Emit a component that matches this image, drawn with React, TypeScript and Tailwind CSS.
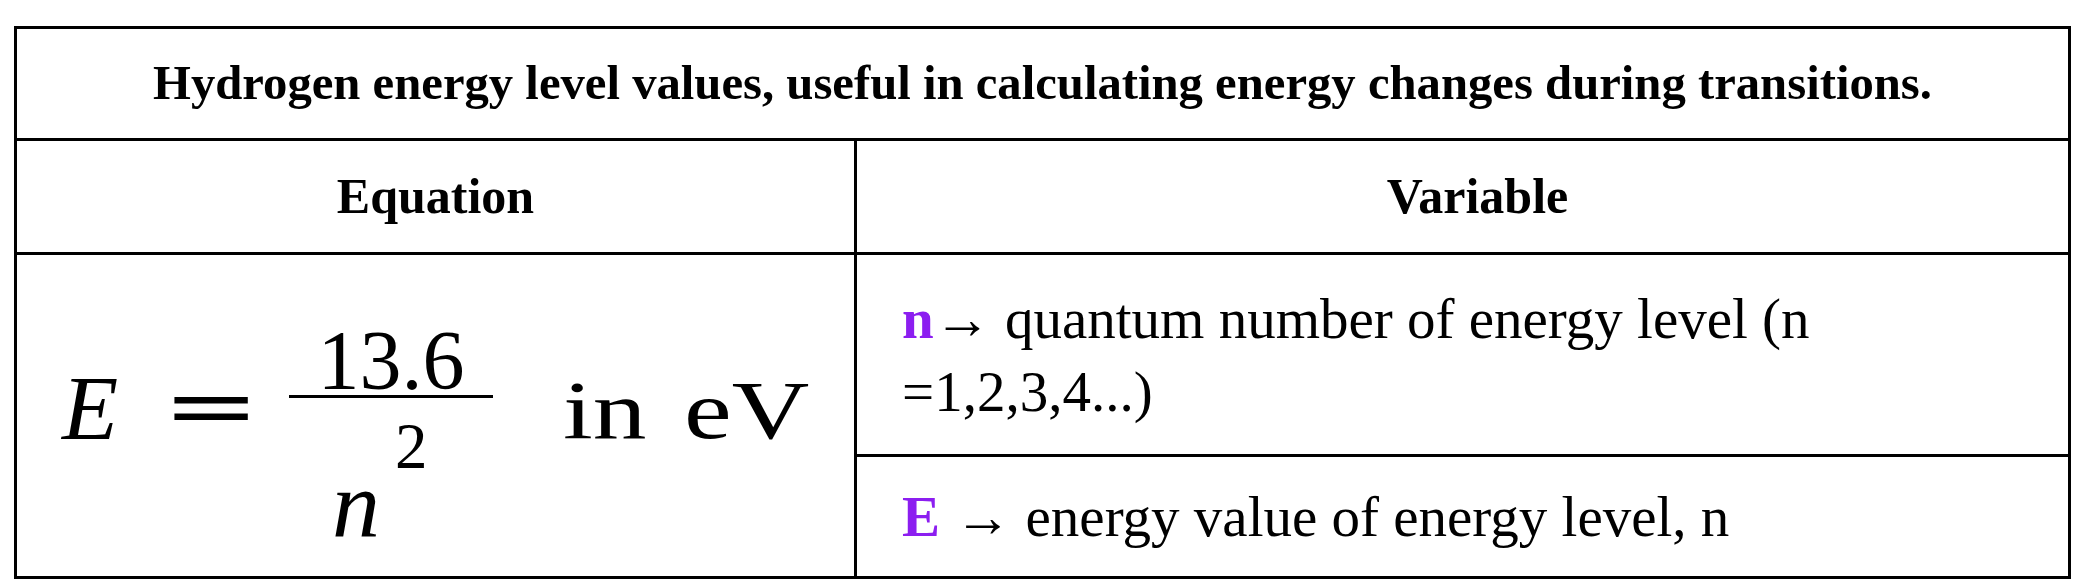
const serif = "font-['Liberation_Serif','Times_New_Roman',serif]";

const Formula = () => {
  return (
    <div className="flex items-start pl-[45px] pt-[45px] text-black">
      <span className="mt-[62px] text-[92px] leading-none italic">E</span>
      <span className="ml-[44px] mt-[65px] origin-left scale-x-143 text-[82px] leading-none font-['DejaVu_Serif',serif]">
        =
      </span>
      <div className="ml-[58px] mt-[19px] flex w-[204px] flex-col items-center">
        <div className="h-[70px] text-[84px] leading-none">13.6</div>
        <div className="mt-[6px] h-[3px] w-full bg-black" />
        <div className="flex w-full items-start pl-[43px]">
          <span className="mt-[59px] text-[96px] leading-none italic">n</span>
          <span className="ml-[15px] mt-[16px] text-[65px] leading-none">2</span>
        </div>
      </div>
      <span className="ml-[70px] mt-[70px] origin-left scale-x-131 text-[82px] leading-none">in</span>
      <span className="ml-[57px] mt-[70px] origin-left scale-x-131 text-[82px] leading-none">eV</span>
    </div>
  );
};

export default function App() {
  return (
    <div className={`min-h-[588px] bg-white pl-[14px] pt-[26px] ${serif}`}>
      <div className="flex h-[553px] w-[2057px] flex-col border-[3px] border-black">
        <div className="flex h-[112px] items-center justify-center border-b-[3px] border-black text-[48.7px] font-bold">
          Hydrogen energy level values, useful in calculating energy changes during transitions.
        </div>

        <div className="flex h-[114px] border-b-[3px] border-black text-[50px] font-bold">
          <div className="flex w-[840px] items-center justify-center border-r-[3px] border-black">
            Equation
          </div>
          <div className="flex flex-1 items-center justify-center pl-[30px]">Variable</div>
        </div>

        <div className="flex flex-1">
          <div className="w-[840px] border-r-[3px] border-black">
            <Formula />
          </div>
          <div className="flex flex-1 flex-col text-[57px] leading-[73px]">
            <div className="flex h-[202px] flex-col justify-center border-b-[3px] border-black pl-[45px]">
              <p>
                <span className="font-bold text-[#8c1ef0]">n</span>→ quantum number of energy level (n
                <br />
                =1,2,3,4...)
              </p>
            </div>
            <div className="flex flex-1 flex-col justify-center pl-[45px]">
              <p>
                <span className="font-bold text-[#8c1ef0]">E</span> → energy value of energy level, n
              </p>
            </div>
          </div>
        </div>
      </div>
    </div>
  );
}
